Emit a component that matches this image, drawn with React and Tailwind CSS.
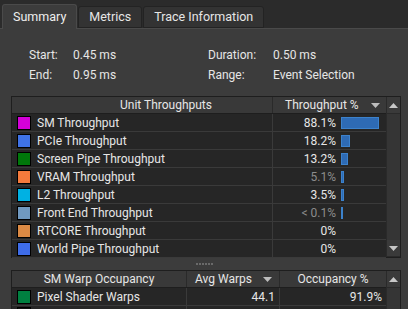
import React from "react";

const throughputs = [
  { name: "SM Throughput", color: "bg-[#d400d8]", value: "88.1%", bar: "w-[38px]", dim: false },
  { name: "PCIe Throughput", color: "bg-[#3f72e6]", value: "18.2%", bar: "w-[9px]", dim: false },
  { name: "Screen Pipe Throughput", color: "bg-[#00780a]", value: "13.2%", bar: "w-[7px]", dim: false },
  { name: "VRAM Throughput", color: "bg-[#f57a3c]", value: "5.1%", bar: "w-[3px]", dim: true },
  { name: "L2 Throughput", color: "bg-[#00b1e3]", value: "3.5%", bar: "w-[3px]", dim: false },
  { name: "Front End Throughput", color: "bg-[#7099c0]", value: "< 0.1%", bar: "w-[2px]", dim: true },
  { name: "RTCORE Throughput", color: "bg-[#dc8a44]", value: "0%", bar: "", dim: false },
  { name: "World Pipe Throughput", color: "bg-[#3e6ce8]", value: "0%", bar: "", dim: false },
];

function Swatch({ color }) {
  return <div className={`w-[14px] h-[14px] border border-black shrink-0 ${color}`} />;
}

function SortArrow() {
  return (
    <svg width="9" height="5" viewBox="0 0 9 5" className="shrink-0">
      <path d="M0 0 H9 L4.5 5 Z" fill="#bdbdbd" />
    </svg>
  );
}

function ScrollArrow({ up }) {
  return (
    <div className="h-[17px] flex items-center justify-center bg-[#3a3a3a] border-b border-[#2a2a2a]">
      <svg width="9" height="5" viewBox="0 0 9 5">
        <path d={up ? "M0 5 H9 L4.5 0 Z" : "M0 0 H9 L4.5 5 Z"} fill="#c8c8c8" />
      </svg>
    </div>
  );
}

function Tab({ label, active }) {
  return active ? (
    <div className="h-[25px] px-[10px] flex items-center bg-[#3c3c3c] border border-b-0 border-[#4a4a4a] rounded-t-[3px] text-[#eeeeee] -mb-px z-10">
      {label}
    </div>
  ) : (
    <div className="h-[22px] px-[10px] flex items-center bg-[#333333] border border-[#232323] rounded-t-[3px] text-[#e6e6e6]">
      {label}
    </div>
  );
}

export default function App() {
  return (
    <div
      className="w-[408px] h-[309px] overflow-hidden bg-[#2b2b2b] text-[12px] text-[#e6e6e6] flex flex-col"
      style={{ fontFamily: "Roboto, 'Liberation Sans', sans-serif" }}
    >
      {/* Tabs */}
      <div className="h-[28px] flex items-end pl-[2px] gap-[1px] shrink-0 text-[12.5px]">
        <Tab label="Summary" active />
        <Tab label="Metrics" />
        <Tab label="Trace Information" />
      </div>

      {/* Panel */}
      <div className="flex-1 bg-[#3c3c3c] border-t border-[#4a4a4a] pl-[11px] pr-[7px]">
        <div className="grid grid-cols-[44px_135px_65px_1fr] pl-[18px] pt-[18px] gap-y-[4px] leading-[16px]">
          <span>Start:</span>
          <span>0.45 ms</span>
          <span>Duration:</span>
          <span>0.50 ms</span>
          <span>End:</span>
          <span>0.95 ms</span>
          <span>Range:</span>
          <span>Event Selection</span>
        </div>

        {/* Unit throughputs table */}
        <div className="mt-[13px] h-[162px] flex border border-[#1e1e1e] bg-[#262626]">
          <div className="flex-1 flex flex-col">
            <div className="h-[17px] flex bg-[#393939] border-b border-[#1e1e1e]">
              <div className="w-[261px] flex items-center justify-center border-r border-[#2a2a2a] pl-[48px]">
                Unit Throughputs
              </div>
              <div className="flex-1 flex items-center pl-[12px] pr-[6px] justify-between">
                <span>Throughput %</span>
                <SortArrow />
              </div>
            </div>
            {throughputs.map((r) => (
              <div key={r.name} className="h-[18px] flex border-b border-[#3a3a3a]">
                <div className="w-[261px] flex items-center gap-[6px] pl-[5px] border-r border-[#3a3a3a]">
                  <Swatch color={r.color} />
                  <span>{r.name}</span>
                </div>
                <div className="flex-1 flex items-center">
                  <span className={`w-[63px] text-right ${r.dim ? "text-[#8c8c8c]" : ""}`}>{r.value}</span>
                  <div className="ml-[5px]">
                    {r.bar && (
                      <div className={`h-[12px] bg-[#2e6bb5] border border-[#3c82cc] ${r.bar}`} />
                    )}
                  </div>
                </div>
              </div>
            ))}
          </div>
          <div className="w-[14px] flex flex-col justify-between bg-[#353535] border-l border-[#2a2a2a]">
            <ScrollArrow up />
            <ScrollArrow />
          </div>
        </div>

        {/* splitter */}
        <div className="h-[12px] flex items-center justify-center">
          <div className="flex gap-[1px] pr-[4px]">
            {[0, 1, 2, 3, 4, 5].map((i) => (
              <div key={i} className="w-[2px] h-[2px] bg-[#6a6a6a]" />
            ))}
          </div>
        </div>

        {/* SM warp occupancy table */}
        <div className="h-[60px] flex border border-[#1e1e1e] bg-[#262626]">
          <div className="flex-1 flex flex-col">
            <div className="h-[17px] flex bg-[#393939] border-b border-[#1e1e1e]">
              <div className="w-[175px] flex items-center justify-center border-r border-[#2a2a2a]">
                SM Warp Occupancy
              </div>
              <div className="w-[93px] flex items-center justify-between pl-[8px] pr-[7px] border-r border-[#2a2a2a]">
                <span>Avg Warps</span>
                <SortArrow />
              </div>
              <div className="flex-1 flex items-center justify-center">Occupancy %</div>
            </div>
            <div className="h-[18px] flex border-b border-[#3a3a3a]">
              <div className="w-[175px] flex items-center gap-[6px] pl-[5px] border-r border-[#3a3a3a]">
                <Swatch color="bg-[#008040]" />
                <span>Pixel Shader Warps</span>
              </div>
              <div className="w-[93px] flex items-center justify-end pr-[4px] border-r border-[#3a3a3a]">44.1</div>
              <div className="flex-1 flex items-center justify-end pr-[4px]">91.9%</div>
            </div>
            <div className="h-[18px] flex">
              <div className="w-[175px] flex pt-[1px] pl-[5px] border-r border-[#3a3a3a]">
                <Swatch color="bg-[#111111]" />
              </div>
              <div className="w-[93px] border-r border-[#3a3a3a]" />
            </div>
          </div>
          <div className="w-[14px] flex flex-col bg-[#353535] border-l border-[#2a2a2a]">
            <ScrollArrow up />
          </div>
        </div>
      </div>
    </div>
  );
}
